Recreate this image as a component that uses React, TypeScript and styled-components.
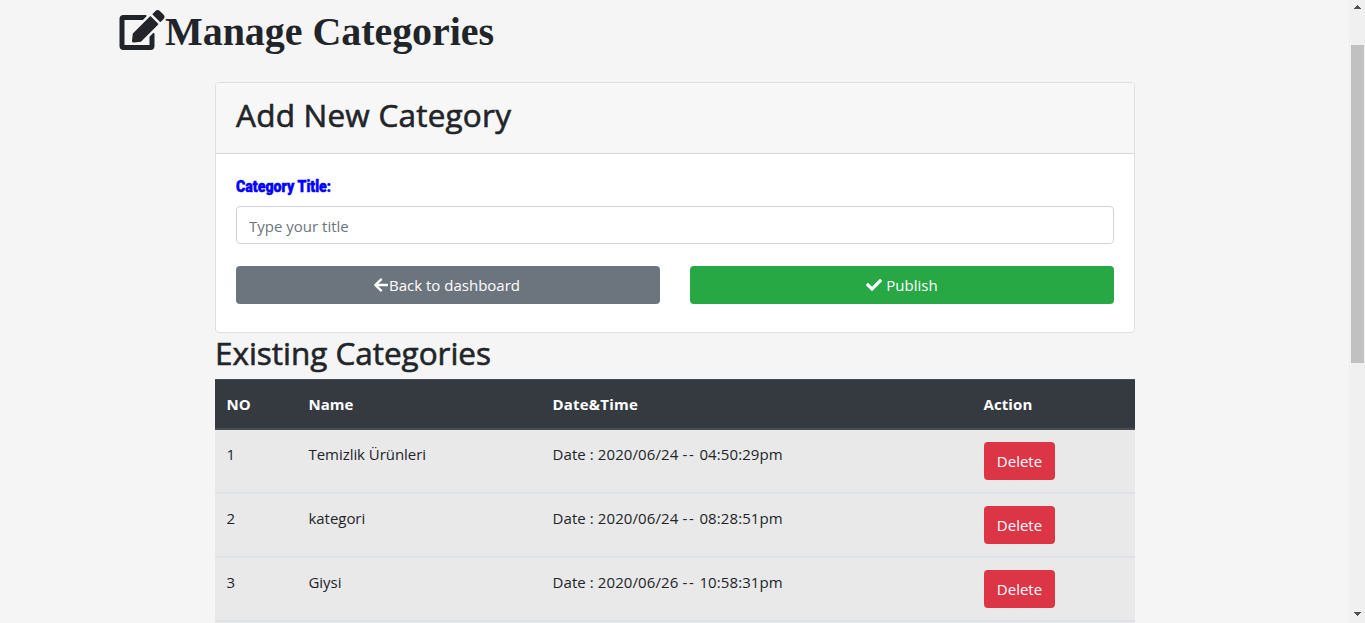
import React from 'react';
import styled, { createGlobalStyle } from 'styled-components';
import { FaArrowLeft, FaCheck, FaEdit } from 'react-icons/fa';

const GlobalStyle = createGlobalStyle`
  *, *::before, *::after { box-sizing: border-box; }
  html, body { margin: 0; height: 623px; overflow: hidden; }
  body {
    background: #f5f5f5;
    color: #212529;
    font-family: "Open Sans", "Noto Sans", sans-serif;
    font-size: 15px;
    line-height: 24px;
  }
`;

const Page = styled.div`
  display: flex;
  height: 623px;
  overflow: hidden;
`;

const Content = styled.main`
  flex: 1;
  min-width: 0;
  padding-left: 119px;
`;

const PageTitle = styled.h1`
  display: flex;
  align-items: flex-start;
  height: 82px;
  margin: 0;
  padding-top: 8px;
  font: bold 40px/48px "Liberation Serif", serif;
  letter-spacing: -0.05px;
  white-space: nowrap;

  svg { width: 46px; height: 40px; margin-top: 2px; }
`;

const Column = styled.div`
  width: 920px;
  margin-left: 96px;
`;

const Card = styled.section`
  height: 251px;
  border: 1px solid #dfdfdf;
  border-radius: 4px;
  background: #fff;
  overflow: hidden;
`;

const CardHeader = styled.header`
  height: 71px;
  padding: 12px 20px;
  border-bottom: 1px solid #d8d8d8;
  background: #f7f7f7;
`;

const Heading = styled.h2<{ $spacing: number }>`
  margin: 0;
  height: 46px;
  font-size: 31.5px;
  font-weight: 500;
  line-height: 40px;
  letter-spacing: ${(p) => p.$spacing}px;
  -webkit-text-stroke: 0.6px currentColor;
  white-space: nowrap;
`;

const CardBody = styled.form`
  padding: 20px;
`;

const Label = styled.label`
  display: block;
  width: max-content;
  height: 24px;
  margin-bottom: 8px;
  color: #00f;
  font: 900 16px/25px Roboto, sans-serif;
  -webkit-text-stroke: 0.5px currentColor;
  transform: scaleX(0.885);
  transform-origin: left center;
`;

const Input = styled.input`
  display: block;
  width: 100%;
  height: 38px;
  padding: 1px 12px 0;
  border: 1px solid #ced4da;
  border-radius: 4px;
  background: #fff;
  font: inherit;

  &::placeholder { color: #6c757d; opacity: 1; }
`;

const Actions = styled.div`
  display: grid;
  grid-template-columns: 1fr 1fr;
  gap: 30px;
  margin-top: 22px;
`;

const Button = styled.button<{ $color: string; $gap?: number }>`
  display: inline-flex;
  align-items: center;
  justify-content: center;
  gap: ${(p) => p.$gap ?? 0}px;
  height: 38px;
  padding: 0 12px;
  border: 0;
  border-radius: 4px;
  background: ${(p) => p.$color};
  color: #fff;
  font: inherit;

  svg { width: auto; height: 16px; }
`;

const BackButton = styled(Button)`
  padding-right: 15px;
`;

const DeleteButton = styled(Button)`
  width: 71px;
  letter-spacing: 0;
`;

const Row = styled.div`
  display: grid;
  grid-template-columns: 82px 244px 431px 163px;
  height: 64px;
  border-bottom: 2px solid #dee2e6;
  background: #e9e9e9;
`;

const HeadRow = styled(Row)`
  height: 51px;
  border-top: 1px solid #454d55;
  border-bottom: 2px solid #454d55;
  background: #343a40;
  color: #fff;
  font-weight: 700;
`;

const Cell = styled.div<{ $spacing?: number }>`
  padding: 12px 12px 0 11.5px;
  letter-spacing: ${(p) => p.$spacing ?? 0}px;
  white-space: nowrap;
`;

const ActionCell = styled(Cell)`
  padding-left: 12px;
`;

const Dashes = styled.span`
  letter-spacing: 1.7px;
`;

const Scrollbar = styled.div`
  display: flex;
  flex-direction: column;
  align-items: center;
  width: 16px;
  height: 623px;
  padding: 5px 1px 7px 2px;
  background: #f0f0f0;
`;

const Thumb = styled.div`
  width: 13px;
  height: 318px;
  margin-top: 36px;
  margin-bottom: auto;
  background: #c1c1c1;
`;

const Arrow = ({ down = false }: { down?: boolean }) => (
  <svg width="7" height="4" viewBox="0 0 7 4" fill="#505050" shapeRendering="crispEdges">
    <path d={down ? 'M0 0h7v1H0zM1 1h5v1H1zM2 2h3v1H2zM3 3h1v1H3z' : 'M3 0h1v1H3zM2 1h3v1H2zM1 2h5v1H1zM0 3h7v1H0z'} />
  </svg>
);

const categories = [
  { name: 'Temizlik Ürünleri', day: '2020/06/24', time: '04:50:29pm' },
  { name: 'kategori', day: '2020/06/24', time: '08:28:51pm' },
  { name: 'Giysi', day: '2020/06/26', time: '10:58:31pm' },
];

export default function App() {
  return (
    <Page>
      <GlobalStyle />
      <Content>
        <PageTitle><FaEdit />Manage Categories</PageTitle>
        <Column>
          <Card>
            <CardHeader><Heading $spacing={0.22}>Add New Category</Heading></CardHeader>
            <CardBody onSubmit={(e) => e.preventDefault()}>
              <Label htmlFor="title">Category Title:</Label>
              <Input id="title" placeholder="Type your title" />
              <Actions>
                <BackButton type="button" $color="#6c757d"><FaArrowLeft />Back to dashboard</BackButton>
                <Button type="submit" $color="#28a745" $gap={4}><FaCheck />Publish</Button>
              </Actions>
            </CardBody>
          </Card>
          <Heading $spacing={-0.03}>Existing Categories</Heading>
          <HeadRow>
            <Cell>NO</Cell>
            <Cell>Name</Cell>
            <Cell $spacing={0.2}>Date&amp;Time</Cell>
            <Cell $spacing={0.1}>Action</Cell>
          </HeadRow>
          {categories.map((c, i) => (
            <Row key={c.name}>
              <Cell>{i + 1}</Cell>
              <Cell $spacing={-0.05}>{c.name}</Cell>
              <Cell $spacing={0.09}>Date : {c.day} <Dashes>--</Dashes> {c.time}</Cell>
              <ActionCell><DeleteButton type="button" $color="#dc3545">Delete</DeleteButton></ActionCell>
            </Row>
          ))}
          <Row />
        </Column>
      </Content>
      <Scrollbar><Arrow /><Thumb /><Arrow down /></Scrollbar>
    </Page>
  );
}
